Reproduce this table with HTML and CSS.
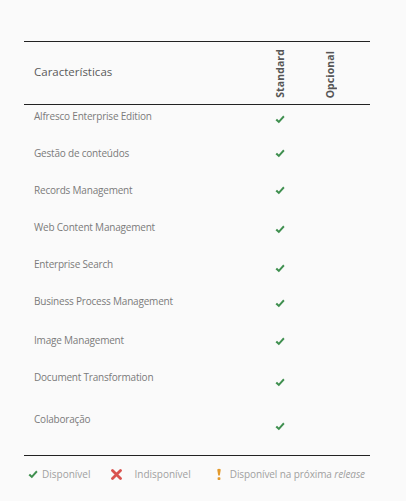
FILE: index.html
```html
<!DOCTYPE html>
<html lang="pt">
<head>
<meta charset="utf-8">
<link rel="stylesheet" href="styles.css">
</head>
<body>
<div class="page">
  <div class="table">
    <div class="head">
      <div class="head-title">Características</div>
      <div class="head-col"><span class="vert">Standard</span></div>
      <div class="head-col"><span class="vert">Opcional</span></div>
    </div>
    <div class="row h37"><div class="name">Alfresco Enterprise Edition</div><div class="cell off3"><svg class="chk" viewBox="0 0 10 9"><path d="M0.5 5.2 L2 3.8 L3.8 5.4 L8.2 0.6 L9.6 1.9 L3.9 8.2 Z" fill="#3f8f4f"/></svg></div><div class="cell"></div></div>
    <div class="row h37"><div class="name">Gestão de conteúdos</div><div class="cell off0"><svg class="chk" viewBox="0 0 10 9"><path d="M0.5 5.2 L2 3.8 L3.8 5.4 L8.2 0.6 L9.6 1.9 L3.9 8.2 Z" fill="#3f8f4f"/></svg></div><div class="cell"></div></div>
    <div class="row h37"><div class="name">Records Management</div><div class="cell off0"><svg class="chk" viewBox="0 0 10 9"><path d="M0.5 5.2 L2 3.8 L3.8 5.4 L8.2 0.6 L9.6 1.9 L3.9 8.2 Z" fill="#3f8f4f"/></svg></div><div class="cell"></div></div>
    <div class="row h37"><div class="name">Web Content Management</div><div class="cell off2"><svg class="chk" viewBox="0 0 10 9"><path d="M0.5 5.2 L2 3.8 L3.8 5.4 L8.2 0.6 L9.6 1.9 L3.9 8.2 Z" fill="#3f8f4f"/></svg></div><div class="cell"></div></div>
    <div class="row h37"><div class="name">Enterprise Search</div><div class="cell off4"><svg class="chk" viewBox="0 0 10 9"><path d="M0.5 5.2 L2 3.8 L3.8 5.4 L8.2 0.6 L9.6 1.9 L3.9 8.2 Z" fill="#3f8f4f"/></svg></div><div class="cell"></div></div>
    <div class="row h39"><div class="name">Business Process Management</div><div class="cell off2"><svg class="chk" viewBox="0 0 10 9"><path d="M0.5 5.2 L2 3.8 L3.8 5.4 L8.2 0.6 L9.6 1.9 L3.9 8.2 Z" fill="#3f8f4f"/></svg></div><div class="cell"></div></div>
    <div class="row h37"><div class="name">Image Management</div><div class="cell off1"><svg class="chk" viewBox="0 0 10 9"><path d="M0.5 5.2 L2 3.8 L3.8 5.4 L8.2 0.6 L9.6 1.9 L3.9 8.2 Z" fill="#3f8f4f"/></svg></div><div class="cell"></div></div>
    <div class="row h42"><div class="name">Document Transformation</div><div class="cell off5"><svg class="chk" viewBox="0 0 10 9"><path d="M0.5 5.2 L2 3.8 L3.8 5.4 L8.2 0.6 L9.6 1.9 L3.9 8.2 Z" fill="#3f8f4f"/></svg></div><div class="cell"></div></div>
    <div class="row h48"><div class="name">Colaboração</div><div class="cell off7"><svg class="chk" viewBox="0 0 10 9"><path d="M0.5 5.2 L2 3.8 L3.8 5.4 L8.2 0.6 L9.6 1.9 L3.9 8.2 Z" fill="#3f8f4f"/></svg></div><div class="cell"></div></div>
  </div>
  <div class="legend">
    <div class="item"><svg class="chk" viewBox="0 0 10 9"><path d="M0.5 5.2 L2 3.8 L3.8 5.4 L8.2 0.6 L9.6 1.9 L3.9 8.2 Z" fill="#3f8f4f"/></svg><span>Disponível</span></div>
    <div class="item"><svg class="x" viewBox="0 0 11 11"><path d="M1.5 1.5 L9.5 9.5 M9.5 1.5 L1.5 9.5" stroke="#d9534f" stroke-width="2.8" stroke-linecap="round"/></svg><span>Indisponível</span></div>
    <div class="item"><svg class="excl" viewBox="0 0 6 13"><path d="M1.2 1.5 Q3 0 4.8 1.5 L3.8 7.5 L2.2 7.5 Z" fill="#e39a2d"/><rect x="1.6" y="9.2" width="2.8" height="2.8" rx="0.8" fill="#e39a2d"/></svg><span>Disponível na próxima <em>release</em></span></div>
  </div>
</div>
</body>
</html>
```

FILE: styles.css
```css
html, body {
  margin: 0;
  padding: 0;
  background: #ffffff;
}
.page {
  width: 406px;
  height: 501px;
  background: #fafafa;
  padding: 41px 0 0 24px;
  box-sizing: border-box;
  font-family: "Open Sans", "Noto Sans", sans-serif;
  color: #7a7a7a;
}
.table {
  width: 346px;
  border-top: 1px solid #222;
  border-bottom: 1px solid #222;
}
.head {
  display: grid;
  grid-template-columns: 231px 50px 50px 1fr;
  height: 62px;
  border-bottom: 1px solid #222;
}
.head-title {
  align-self: center;
  padding-left: 10px;
  font-size: 11.5px;
  color: #5a5a5a;
  padding-bottom: 4px;
}
.head-col {
  display: flex;
  justify-content: center;
  align-items: flex-end;
  padding-bottom: 6px;
}
.vert {
  writing-mode: vertical-rl;
  transform: rotate(180deg);
  font-weight: bold;
  font-size: 10.5px;
  color: #555;
  letter-spacing: 0.1px;
}
.row {
  display: grid;
  grid-template-columns: 231px 50px 50px 1fr;
  box-sizing: border-box;
  padding-top: 4px;
}
.h37 { height: 37px; }
.h39 { height: 39px; }
.h42 { height: 42px; }
.h48 { height: 47px; }
.name {
  padding-left: 10px;
  font-size: 10px;
  line-height: 14px;
  letter-spacing: -0.2px;
}
.cell {
  display: flex;
  justify-content: center;
  height: 14px;
  align-items: center;
}
.off0 { margin-top: 0; }
.off1 { margin-top: 1px; }
.off2 { margin-top: 2px; }
.off3 { margin-top: 3px; }
.off4 { margin-top: 4px; }
.off5 { margin-top: 5px; }
.off7 { margin-top: 7px; }
.chk {
  width: 10px;
  height: 9px;
}
.legend {
  display: flex;
  align-items: center;
  padding: 11px 0 0 4px;
  font-size: 10px;
  color: #a0a0a0;
}
.item {
  display: flex;
  align-items: center;
}
.item span { margin-left: 4px; }
.item:nth-child(2) { margin-left: 21px; }
.item:nth-child(2) span { margin-left: 12px; }
.item:nth-child(3) { margin-left: 25px; }
.item:nth-child(3) span { margin-left: 8px; letter-spacing: -0.1px; }
.x { width: 11px; height: 11px; }
.excl { width: 6px; height: 13px; }
em { font-style: italic; }
```
